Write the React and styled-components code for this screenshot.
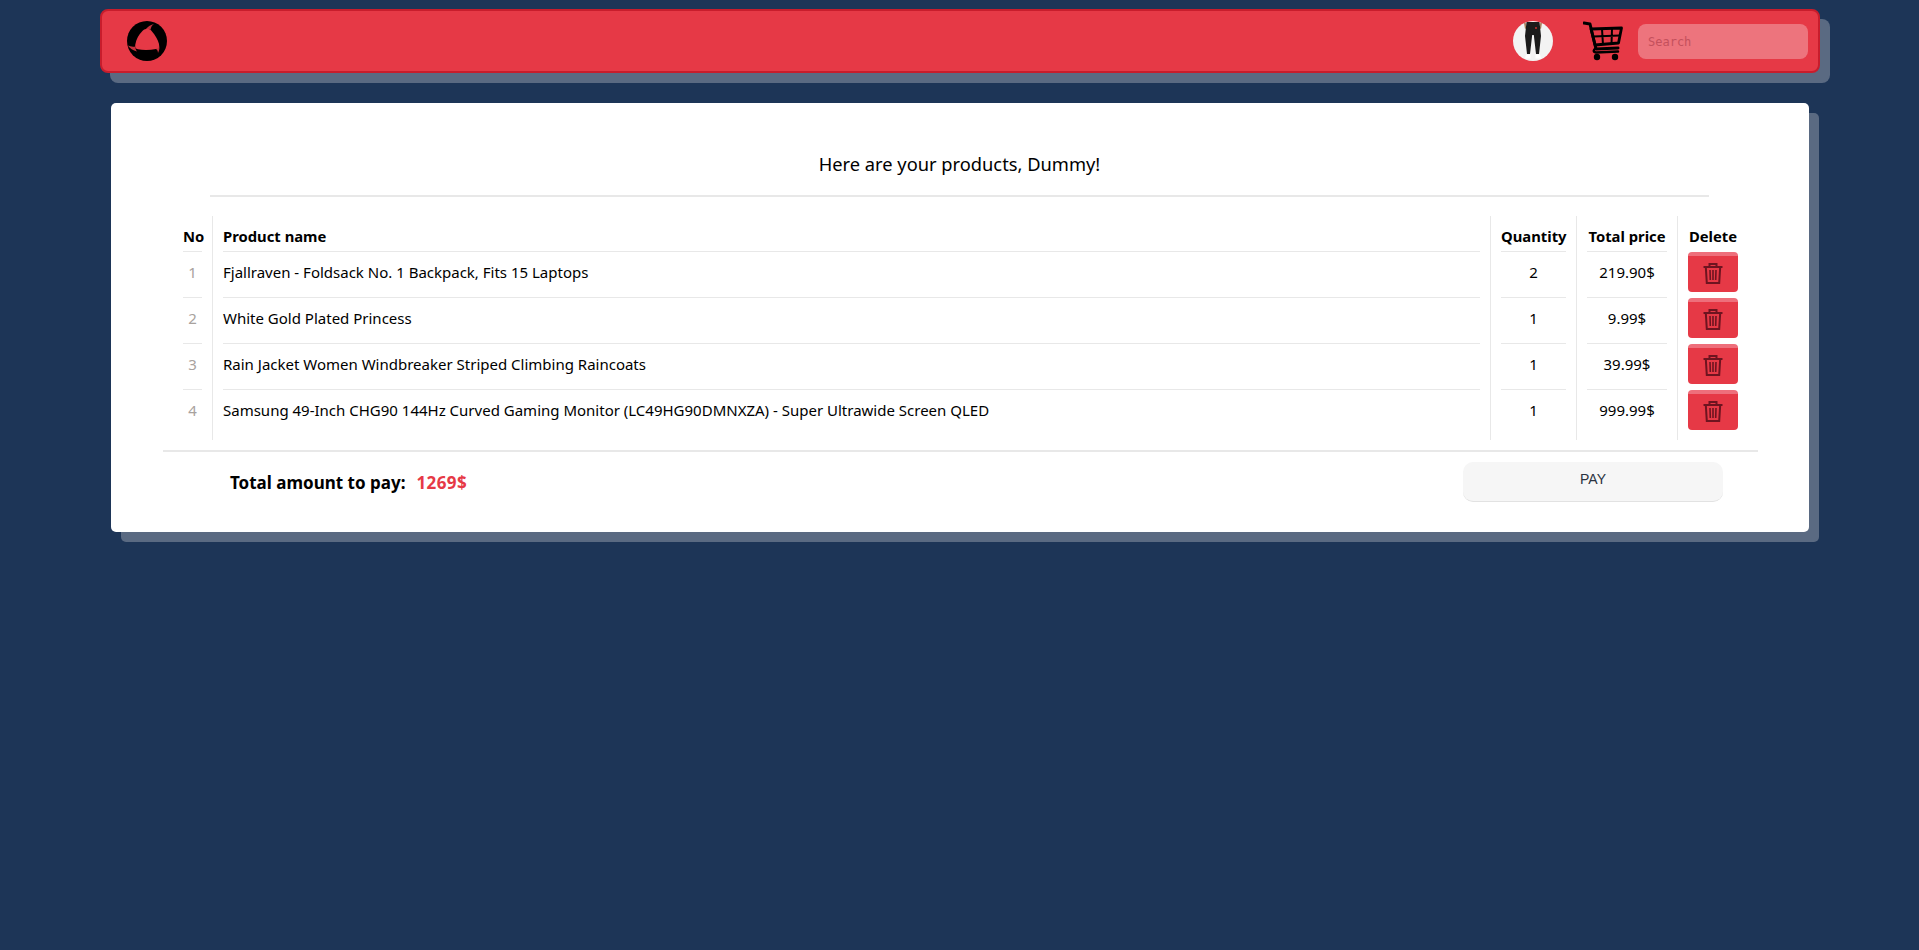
import React from 'react'
import styled, { createGlobalStyle } from 'styled-components'

const GlobalStyle = createGlobalStyle`
  html, body {
    margin: 0;
    min-height: 950px;
    background: #1d3557;
    font-family: "Noto Sans", "Liberation Sans", sans-serif;
  }
  * { box-sizing: border-box; }
`

const Page = styled.div`
  padding: 9px 99px 0 100px;
`

const Nav = styled.nav`
  height: 64px;
  display: flex;
  align-items: center;
  padding: 0 10px 0 25px;
  background: #e63946;
  border: 2px solid #c81d2c;
  border-radius: 8px;
  box-shadow: 10px 10px 0 0 #5a6a82;
`

const Spacer = styled.div`
  flex: 1;
`

const Avatar = styled.div`
  width: 40px;
  height: 40px;
  border-radius: 50%;
  overflow: hidden;
  background: #f3f3f3;
  display: flex;
  align-items: center;
  justify-content: center;
  margin-right: 30px;
`

const CartLink = styled.div`
  width: 40px;
  height: 40px;
  margin-right: 15px;
`

const Search = styled.input`
  width: 170px;
  height: 35px;
  padding: 2px 10px 0;
  border: 0;
  outline: 0;
  border-radius: 8px;
  background: rgba(255, 255, 255, 0.3);
  font-family: "DejaVu Sans Mono", monospace;
  font-size: 12px;
  &::placeholder {
    color: #c4505c;
    opacity: 1;
  }
`

const Card = styled.main`
  margin: 30px 11px 0 11px;
  height: 429px;
  padding: 49px 52px 0;
  background: #fff;
  border-radius: 5px;
  box-shadow: 10px 10px 0 0 #5a6a82;
`

const Title = styled.h2`
  margin: 0 48px 0 47px;
  height: 45px;
  font-size: 18.3px;
  font-weight: 400;
  line-height: 24px;
  text-align: center;
  color: #000;
  border-bottom: 2px solid #e8e8e8;
`

const Table = styled.div`
  display: flex;
  height: 224px;
  margin: 19px 9px 0 10px;
`

const Column = styled.div`
  flex: ${p => (p.$grow ? 1 : 'none')};
  width: ${p => p.$width}px;
  padding: 0 10px;
  border-right: ${p => (p.$last ? 'none' : '1px solid #e8e8e8')};
`

const HeaderCell = styled.div`
  height: 35px;
  padding-top: 10px;
  font-size: 14.8px;
  line-height: 20px;
  font-weight: 700;
  white-space: nowrap;
  text-align: ${p => (p.$left ? 'left' : 'center')};
  color: #000;
`

const Cell = styled.div`
  height: 46px;
  padding-bottom: 6px;
  display: flex;
  align-items: center;
  justify-content: ${p => (p.$left ? 'flex-start' : 'center')};
  font-size: 15px;
  white-space: nowrap;
  color: ${p => (p.$muted ? '#a8a29e' : '#000')};
  border-top: 1px solid #e8e8e8;
`

const DeleteButton = styled.button`
  width: 50px;
  height: 40px;
  margin: 0 0 6px;
  padding: 0 0 2px;
  display: flex;
  align-items: center;
  justify-content: center;
  background: #e63946;
  border: 0;
  border-top: 4px solid #ee6f7b;
  border-radius: 4px;
  &:nth-child(2) {
    margin-top: 1px;
  }
`

const Footer = styled.div`
  display: flex;
  align-items: center;
  justify-content: space-between;
  height: 62px;
  margin: 10px -1px 0 0;
  padding: 0 35px 1px 67px;
  border-top: 2px solid #e8e8e8;
`

const Total = styled.div`
  padding-top: 1px;
  font-size: 17px;
  font-weight: 700;
  color: #000;
`

const Amount = styled.span`
  margin-left: 11px;
  letter-spacing: 0.4px;
  color: #e63946;
`

const PayButton = styled.button`
  width: 260px;
  height: 40px;
  padding: 0 0 5px;
  border: 0;
  border-bottom: 1px solid #e2e2e2;
  border-radius: 10px;
  background: #f6f6f6;
  font-family: "Liberation Sans", sans-serif;
  font-size: 14px;
  color: #2b3340;
`

const Logo = () => (
  <svg width="40" height="40" viewBox="0 0 40 40">
    <circle cx="20" cy="20" r="20" fill="#000" />
    <path d="M19 8 C21.500 7.500 23.500 8.500 25 10.500 C28 14 31 18.500 32 23 C32.500 26 31.500 27.500 29 28 C23 29.200 16 29.200 11 28.300 C8.500 27.800 7.800 26 8.300 23.500 C9.300 18 12 13.500 15 10.500 C16.200 9.200 17.500 8.300 19 8 Z" fill="#e63946" />
    <path d="M19 8 C21 5.500 24 3.500 27 3 C25 4.300 24 6 23.500 8.800 C22 8 20.500 7.800 19 8 Z" fill="#e63946" opacity="0.85" />
    <path d="M8.300 25.500 C5.500 26 3 25.500 0.800 24.500 C3 27.500 6 29.500 10 30.500 C9 29.500 8.500 27.500 8.300 25.500 Z" fill="#e63946" opacity="0.85" />
    <path d="M32 24 C32.800 26.500 32.500 29 31 32 C31 30.500 30.500 29 29 28 Z" fill="#e63946" opacity="0.85" />
  </svg>
)

const Pants = () => (
  <svg width="40" height="40" viewBox="0 0 40 40">
    <path d="M12.500 0 L13.500 7 L12 8 L11 2 Z M27.500 0 L26.500 7 L28 8 L29 2 Z" fill="#a9815f" />
    <path d="M13.500 1 L26.500 1 L28 15 L26 33 L23 33 L20.800 14 L19.200 14 L17 33 L14 33 L12 15 Z" fill="#1b1b1b" />
    <path d="M13 33.500 L17.500 33.500 L17.500 37.500 L12 37.500 Z M22.500 33.500 L27 33.500 L28 37.500 L22.500 37.500 Z" fill="#fff" />
    <circle cx="23" cy="7" r="0.900" fill="#d33" />
  </svg>
)

const Cart = () => (
  <svg width="40" height="40" viewBox="0 0 40 40" fill="none" stroke="#000">
    <path d="M1 2 L7 3 L13 28 L35 27" strokeWidth="3" strokeLinecap="round" strokeLinejoin="round" />
    <path d="M13 27 C10 29 10 31 13 31.500 L35 30.500" strokeWidth="2.500" strokeLinecap="round" />
    <path d="M8 8 L38.500 7 L35.500 22 L12 24 Z" strokeWidth="2.800" strokeLinejoin="round" />
    <path d="M19 8 L20 24 M29 8 L28.500 23 M10 15.500 L37 14.500" strokeWidth="2" />
    <circle cx="14" cy="36" r="3.200" fill="#000" stroke="none" />
    <circle cx="32" cy="36" r="3.200" fill="#000" stroke="none" />
  </svg>
)

const Trash = () => (
  <svg width="20" height="21" viewBox="0 0 20 21" fill="none" stroke="#6e1420" strokeWidth="2">
    <path d="M0.500 4 L19.500 4" />
    <path d="M6.500 3.500 L6.500 1 L13.500 1 L13.500 3.500" />
    <path d="M2.800 4 L3.800 20 L16.200 20 L17.200 4" />
    <path d="M7 7 L7.300 17 M10 7 L10 17 M13 7 L12.700 17" strokeWidth="1.600" />
  </svg>
)

const products = [
  { id: 1, name: 'Fjallraven - Foldsack No. 1 Backpack, Fits 15 Laptops', quantity: 2, price: '219.90$' },
  { id: 2, name: 'White Gold Plated Princess', quantity: 1, price: '9.99$' },
  { id: 3, name: 'Rain Jacket Women Windbreaker Striped Climbing Raincoats', quantity: 1, price: '39.99$' },
  { id: 4, name: 'Samsung 49-Inch CHG90 144Hz Curved Gaming Monitor (LC49HG90DMNXZA) - Super Ultrawide Screen QLED', quantity: 1, price: '999.99$' },
]

export default function App() {
  return (
    <Page>
      <GlobalStyle />
      <Nav>
        <Logo />
        <Spacer />
        <Avatar><Pants /></Avatar>
        <CartLink><Cart /></CartLink>
        <Search placeholder="Search" />
      </Nav>
      <Card>
        <Title>Here are your products, Dummy!</Title>
        <Table>
          <Column $width={40}>
            <HeaderCell>No</HeaderCell>
            {products.map(x => <Cell key={x.id} $muted>{x.id}</Cell>)}
          </Column>
          <Column $grow>
            <HeaderCell $left>Product name</HeaderCell>
            {products.map(x => <Cell key={x.id} $left>{x.name}</Cell>)}
          </Column>
          <Column $width={86}>
            <HeaderCell>Quantity</HeaderCell>
            {products.map(x => <Cell key={x.id}>{x.quantity}</Cell>)}
          </Column>
          <Column $width={101}>
            <HeaderCell>Total price</HeaderCell>
            {products.map(x => <Cell key={x.id}>{x.price}</Cell>)}
          </Column>
          <Column $width={70} $last>
            <HeaderCell>Delete</HeaderCell>
            {products.map(x => <DeleteButton key={x.id}><Trash /></DeleteButton>)}
          </Column>
        </Table>
        <Footer>
          <Total>Total amount to pay:<Amount>1269$</Amount></Total>
          <PayButton>PAY</PayButton>
        </Footer>
      </Card>
    </Page>
  )
}
